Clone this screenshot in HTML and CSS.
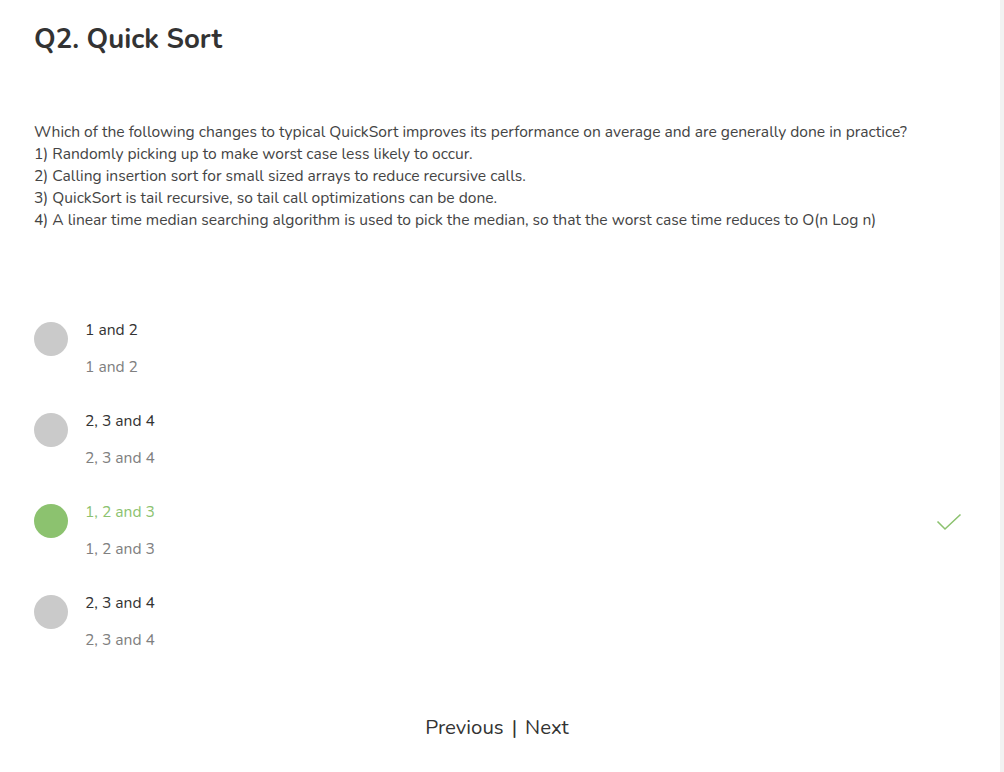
FILE: index.html
```html
<!DOCTYPE html>
<html lang="en">
<head>
<meta charset="utf-8">
<title>Q2. Quick Sort</title>
<link rel="stylesheet" href="styles.css">
</head>
<body>
<div class="page">
  <h1 class="title">Q2. Quick Sort</h1>
  <div class="question">
    <p>Which of the following changes to typical QuickSort improves its performance on average and are generally done in practice?</p>
    <p>1) Randomly picking up to make worst case less likely to occur.</p>
    <p>2) Calling insertion sort for small sized arrays to reduce recursive calls.</p>
    <p>3) QuickSort is tail recursive, so tail call optimizations can be done.</p>
    <p>4) A linear time median searching algorithm is used to pick the median, so that the worst case time reduces to O(n Log n)</p>
  </div>
  <ul class="options">
    <li class="option">
      <span class="dot"></span>
      <div class="text">
        <div class="label">1 and 2</div>
        <div class="sub">1 and 2</div>
      </div>
    </li>
    <li class="option">
      <span class="dot"></span>
      <div class="text">
        <div class="label">2, 3 and 4</div>
        <div class="sub">2, 3 and 4</div>
      </div>
    </li>
    <li class="option correct">
      <span class="dot"></span>
      <div class="text">
        <div class="label">1, 2 and 3</div>
        <div class="sub">1, 2 and 3</div>
      </div>
      <svg class="check" width="26" height="18" viewBox="0 0 26 18"><path d="M1.5 8.5 L9 16 L24.5 1.5" fill="none" stroke="#8cc26f" stroke-width="1.6"/></svg>
    </li>
    <li class="option">
      <span class="dot"></span>
      <div class="text">
        <div class="label">2, 3 and 4</div>
        <div class="sub">2, 3 and 4</div>
      </div>
    </li>
  </ul>
  <nav class="pager"><a>Previous</a><span class="sep">|</span><a>Next</a></nav>
</div>
</body>
</html>
```
FILE: styles.css
```css
html, body {
  margin: 0;
  padding: 0;
  background: #fff;
}
body {
  font-family: "Nunito", "Open Sans", sans-serif;
  color: #333;
}
.page {
  width: 1004px;
  min-height: 772px;
  box-sizing: border-box;
  border-right: 4px solid #f2f2f2;
  padding: 20px 34px 0 34px;
}
.title {
  margin: 0;
  font-size: 27.6px;
  line-height: 38px;
  font-weight: 700;
  color: #333;
}
.question {
  margin-top: 63px;
  font-size: 15.6px;
  line-height: 22px;
  color: #444;
}
.question p {
  margin: 0;
}
.options {
  list-style: none;
  margin: 88px 0 0;
  padding: 0;
}
.option {
  display: flex;
  align-items: flex-start;
  margin-bottom: 32px;
}
.dot {
  flex: none;
  width: 34px;
  height: 34px;
  border-radius: 50%;
  background: #cacaca;
  margin-top: 3px;
  margin-right: 17px;
}
.text {
  font-size: 15.6px;
  line-height: 22px;
}
.label {
  color: #333;
}
.sub {
  margin-top: 15px;
  color: #808080;
}
.correct .dot {
  background: #8cc26f;
}
.correct .label {
  color: #8cc26f;
}
.check {
  margin-left: auto;
  margin-right: 4px;
  margin-top: 12px;
}
.pager {
  margin-top: 62px;
  text-align: center;
  font-size: 20.4px;
  line-height: 28px;
  color: #333;
  padding-right: 6px;
}
.sep {
  margin: 0 8px;
}
```
